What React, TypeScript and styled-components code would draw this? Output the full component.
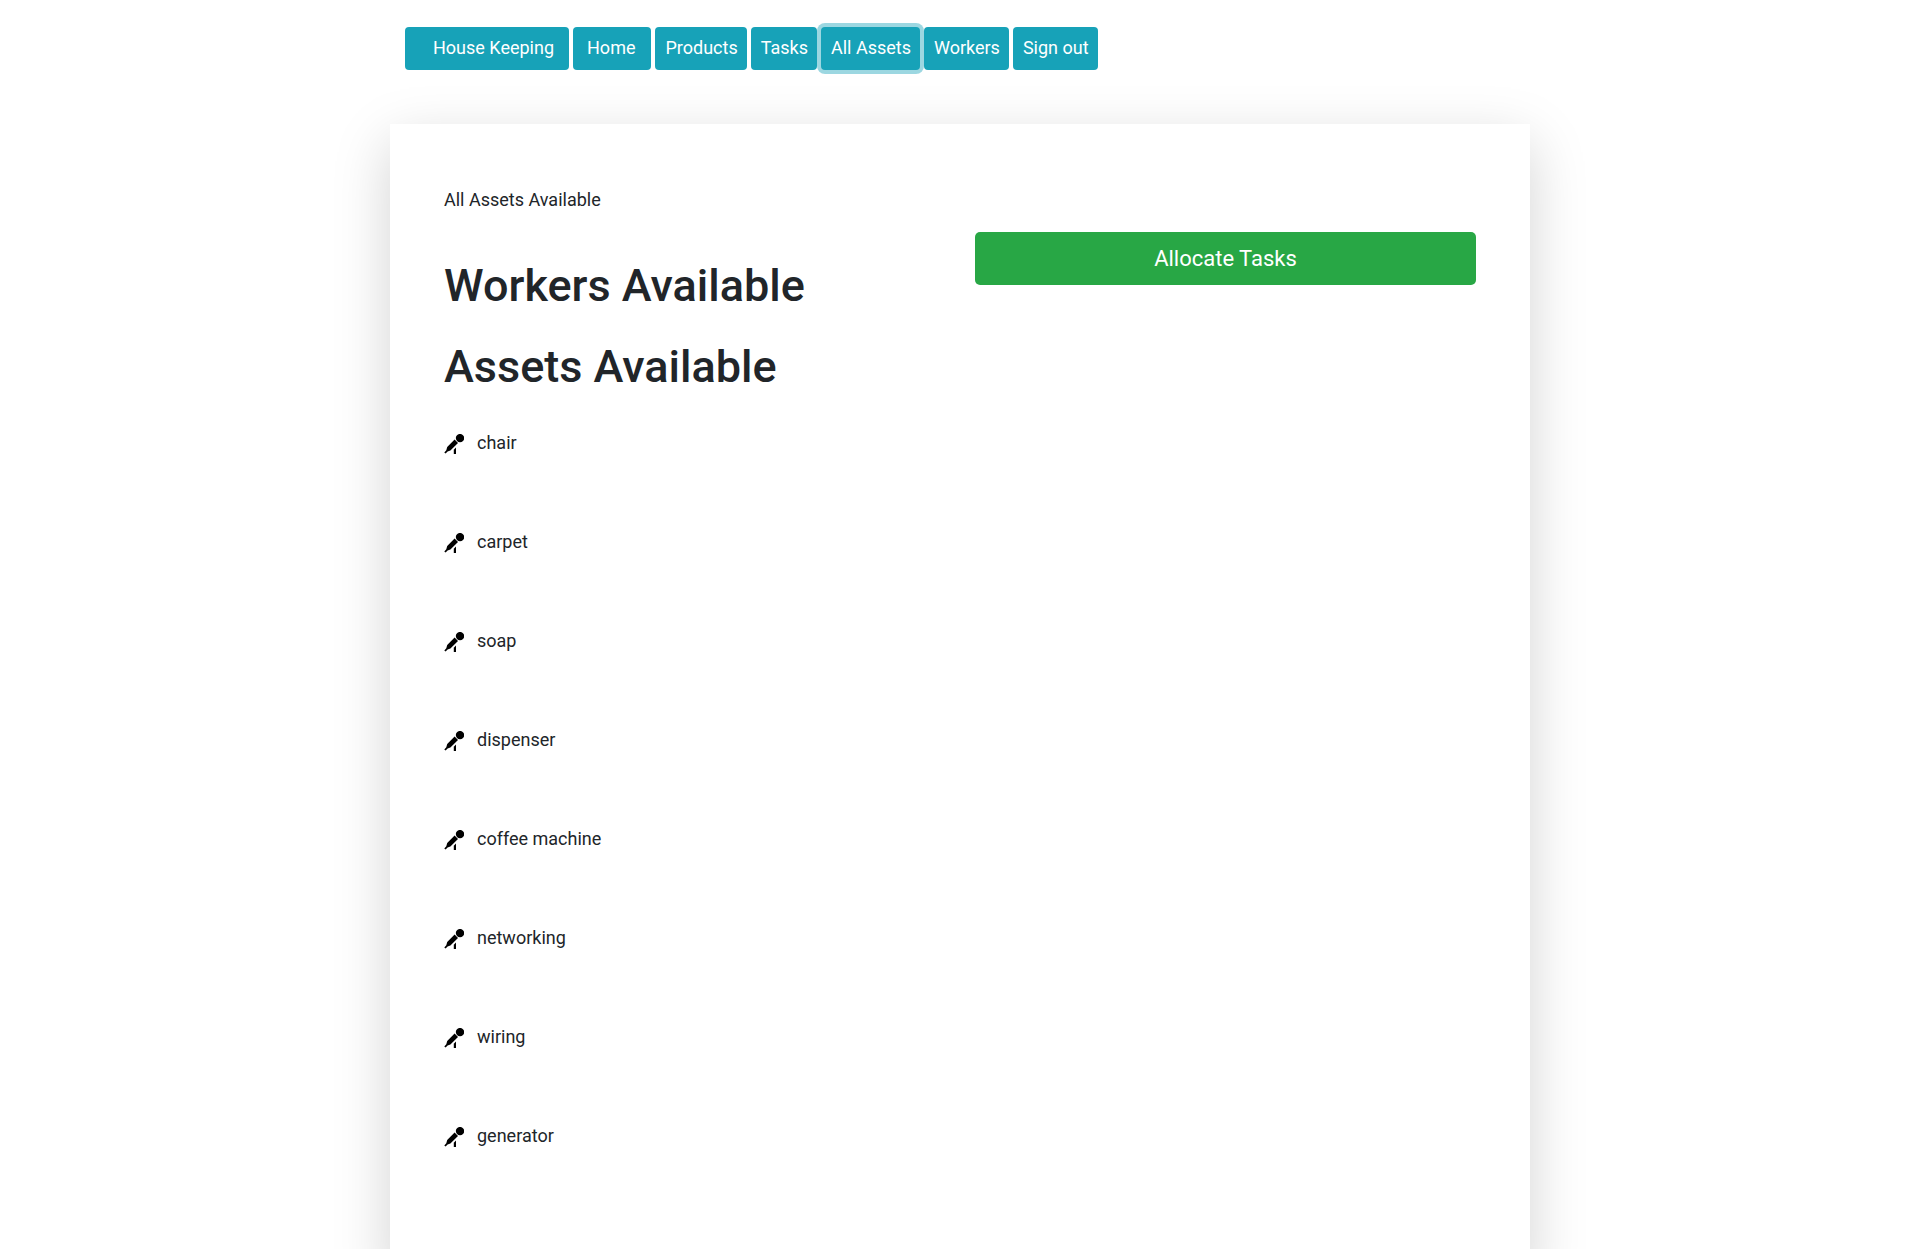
import React from "react";
import styled, { createGlobalStyle } from "styled-components";

const GlobalStyle = createGlobalStyle`
  *, *::before, *::after { box-sizing: border-box; }
  body {
    margin: 0;
    background: #fff;
    color: #212529;
    font-family: Roboto, "Liberation Sans", sans-serif;
    font-size: 18px;
    line-height: 27px;
  }
`;

const Container = styled.div`
  width: 100%;
  max-width: 1140px;
  margin: 0 auto;
`;

const Nav = styled.nav`
  display: flex;
  flex-wrap: wrap;
  gap: 4px;
  padding: 27px 15px 54px;
`;

const NavLink = styled.a<{ $padding?: string; $focused?: boolean }>`
  padding: ${(p) => p.$padding ?? "7px 9px 9px 10px"};
  border-radius: 4px;
  background: #17a2b8;
  color: #fff;
  text-decoration: none;
  white-space: nowrap;
  box-shadow: ${(p) => (p.$focused ? "0 0 0 4px rgba(58, 176, 195, 0.5)" : "none")};
`;

const Card = styled.main`
  padding: 62px 54px 54px;
  background: #fff;
  box-shadow: 0 18px 54px rgba(0, 0, 0, 0.175);
`;

const Intro = styled.p`
  margin: 0 0 19px;
`;

const Columns = styled.div`
  display: grid;
  grid-template-columns: 1fr 1fr;
  gap: 30px;
  align-items: start;
`;

const Heading = styled.h1`
  margin: 27px 0;
  font-size: 45px;
  font-weight: 500;
  line-height: 54px;
`;

const AssetList = styled.ul`
  display: flex;
  flex-direction: column;
  gap: 72px;
  margin: 35px 0 0;
  padding: 0 0 72px;
  list-style: none;
`;

const Asset = styled.li`
  display: flex;
  align-items: center;
  gap: 13px;
`;

const AssetIcon = styled.svg`
  flex: none;
  width: 20px;
  height: 20px;
  margin-top: 2px;
  fill: #000;
`;

const AllocateButton = styled.button`
  width: 100%;
  padding: 9px 18px;
  border: 0;
  border-radius: 5px;
  background: #28a745;
  color: #fff;
  font-family: inherit;
  font-size: 22px;
  line-height: 35px;
  cursor: pointer;
`;

const links = [
  { label: "House Keeping", padding: "7px 15px 9px 28px" },
  { label: "Home", padding: "7px 16px 9px 14px" },
  { label: "Products" },
  { label: "Tasks" },
  { label: "All Assets", focused: true },
  { label: "Workers" },
  { label: "Sign out" },
];

const assets = [
  "chair",
  "carpet",
  "soap",
  "dispenser",
  "coffee machine",
  "networking",
  "wiring",
  "generator",
];

const Microphone = () => (
  <AssetIcon viewBox="0 0 20 20" aria-hidden="true">
    <circle cx="16" cy="4.1" r="4.2" />
    <path d="M10.6 5.6 14 8.9 6.4 16.4 3.6 17.5 1.6 19.6.3 18.4 2.3 16.2 3.2 13Z" />
    <path d="M9.8 15.8 12 13.6V20H9.8Z" />
  </AssetIcon>
);

export default function App() {
  return (
    <>
      <GlobalStyle />
      <Container>
        <Nav aria-label="Main">
          {links.map(({ label, padding, focused }) => (
            <NavLink key={label} href="#" $padding={padding} $focused={focused}>
              {label}
            </NavLink>
          ))}
        </Nav>
        <Card>
          <Intro>All Assets Available</Intro>
          <Columns>
            <section>
              <Heading>Workers Available</Heading>
              <Heading>Assets Available</Heading>
              <AssetList>
                {assets.map((name) => (
                  <Asset key={name}>
                    <Microphone />
                    {name}
                  </Asset>
                ))}
              </AssetList>
            </section>
            <AllocateButton type="button">Allocate Tasks</AllocateButton>
          </Columns>
        </Card>
      </Container>
    </>
  );
}
